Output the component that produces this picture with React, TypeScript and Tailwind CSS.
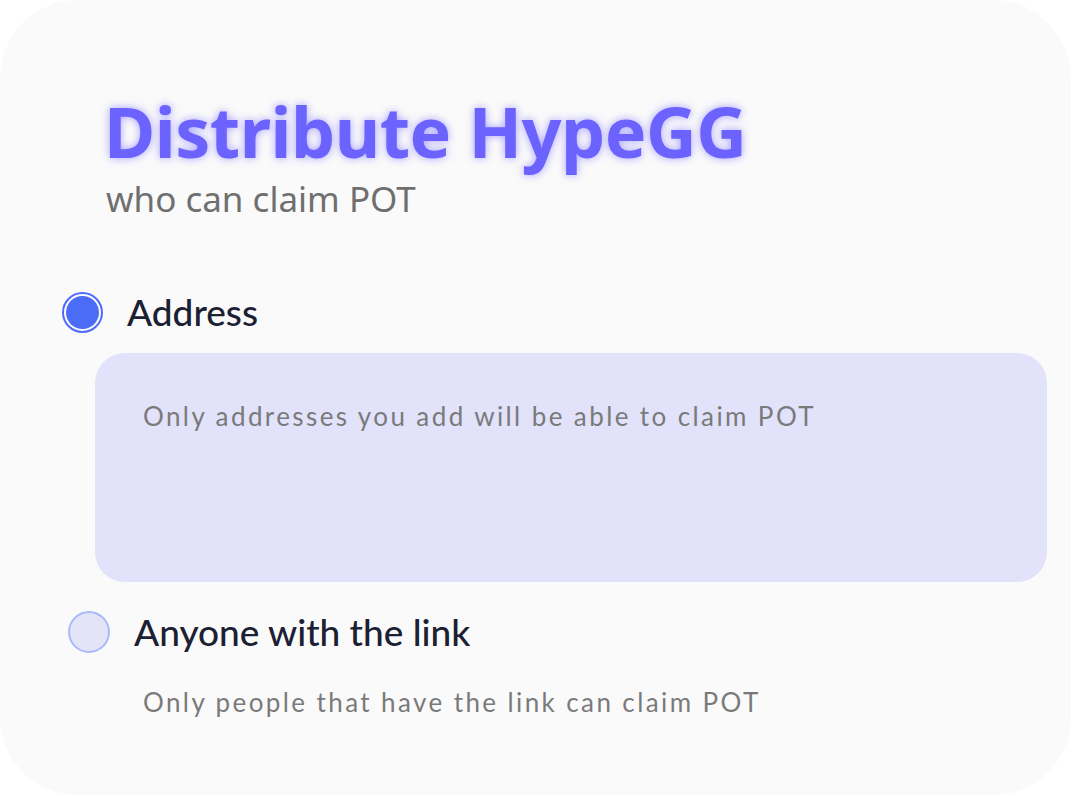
import React from "react";

export default function App() {
  return (
    <div className="w-[1072px] h-[796px] bg-white">
      <div className="w-[1071px] h-[795px] rounded-[78px] bg-[#fafafa] relative overflow-hidden">
        <div className="pl-[104px] pt-[86px]">
          <h1
            className="text-[70px] leading-[90px] font-bold text-[#6c63ff] tracking-[-0.5px]"
            style={{ fontFamily: '"Noto Sans", sans-serif', textShadow: "0 0 8px rgba(108,99,255,0.6)" }}
          >
            Distribute HypeGG
          </h1>
          <div
            className="text-[35px] leading-[40px] text-[#6f6f6f] mt-[3px] pl-[2px]"
            style={{ fontFamily: '"Noto Sans", sans-serif' }}
          >
            who can claim POT
          </div>
        </div>

        <div className="pl-[62px] mt-[71px] flex items-center gap-[24px]" style={{ fontFamily: "Lato, sans-serif" }}>
          <div className="w-[41px] h-[41px] rounded-full border-2 border-[#4e6bff] flex items-center justify-center">
            <div className="w-[33px] h-[33px] rounded-full bg-[#4a6cf7]" />
          </div>
          <span className="text-[37px] leading-[44px] text-[#1b2033] font-medium">Address</span>
        </div>

        <div
          className="ml-[95px] mt-[19px] w-[952px] h-[229px] rounded-[30px] bg-[#e2e2fb] pl-[48px] pt-[44px]"
          style={{ fontFamily: "Lato, sans-serif" }}
        >
          <span className="text-[26px] tracking-[2.4px] text-[#7a7a7a]">Only addresses you add will be able to claim POT</span>
        </div>

        <div className="pl-[68px] mt-[28px] flex items-center gap-[24px]" style={{ fontFamily: "Lato, sans-serif" }}>
          <div className="w-[42px] h-[42px] rounded-full border-2 border-[#a9bafc] bg-[#e4e4f9]" />
          <span className="text-[37px] leading-[44px] text-[#1b2033] font-medium">Anyone with the link</span>
        </div>

        <div className="pl-[143px] mt-[29px]" style={{ fontFamily: "Lato, sans-serif" }}>
          <span className="text-[26px] tracking-[2.4px] text-[#7a7a7a]">Only people that have the link can claim POT</span>
        </div>
      </div>
    </div>
  );
}
